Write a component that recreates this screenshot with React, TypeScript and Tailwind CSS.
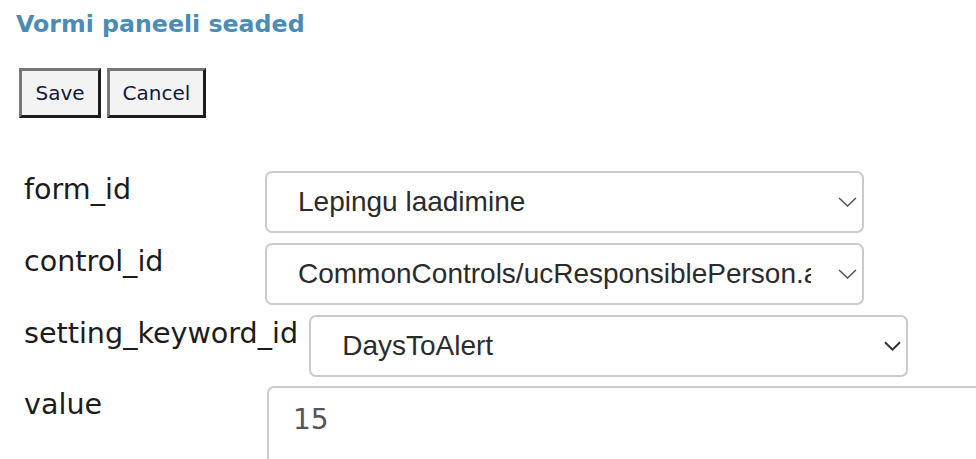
import React from "react";

function Chevron({ bold }: { bold?: boolean }) {
  return (
    <svg
      width={bold ? 17 : 19}
      height="10"
      viewBox={bold ? "0 0 17 10" : "0 0 19 10"}
      fill="none"
      className="shrink-0"
    >
      {bold ? (
        <path d="M1 1.2 L8.5 8.6 L16 1.2" stroke="#333" strokeWidth="2" />
      ) : (
        <path d="M1 1 L9.5 9 L18 1" stroke="#4a4a4a" strokeWidth="1.3" />
      )}
    </svg>
  );
}

function FakeSelect({ text, bold }: { text: string; bold?: boolean }) {
  return (
    <div className="flex h-[62px] w-[599px] shrink-0 items-center rounded-[7px] border-2 border-[#cbcbcb] bg-white pl-[31px] pr-[5px]">
      <span className="min-w-0 flex-1 overflow-hidden whitespace-nowrap font-['Liberation_Sans',Arial,sans-serif] text-[28px] leading-[32px] text-[#2b2b2b]">
        {text}
      </span>
      <span className="ml-[27px] flex items-center">
        <Chevron bold={bold} />
      </span>
    </div>
  );
}

function Label({ children }: { children: React.ReactNode }) {
  return (
    <div className="mt-[2px] mr-[11px] min-w-[230px] whitespace-nowrap text-[28.6px] leading-[32px] text-[#1c1c1c]">
      {children}
    </div>
  );
}

export default function App() {
  return (
    <div className="h-[459px] w-[976px] overflow-hidden bg-white pl-[16px] font-['DejaVu_Sans',Verdana,sans-serif]">
      <h2 className="mt-[10px] text-[23.7px] font-bold leading-[28px] text-[#4b8cb5]">
        Vormi paneeli seaded
      </h2>

      <div className="ml-[3px] mt-[30px] flex gap-[6px]">
        <button className="flex h-[50px] w-[82px] items-center justify-center border-[3px] border-b-[#1c1c1c] border-l-[#767676] border-r-[#1c1c1c] border-t-[#767676] bg-[#f3f3f3] text-[20px] text-[#0f1a3f]">
          Save
        </button>
        <button className="flex h-[50px] w-[99px] items-center justify-center border-[3px] border-b-[#1c1c1c] border-l-[#767676] border-r-[#1c1c1c] border-t-[#767676] bg-[#f3f3f3] text-[20px] text-[#0f1a3f]">
          Cancel
        </button>
      </div>

      <div className="ml-[8px] mt-[53px] flex flex-col gap-[10px]">
        <div className="flex items-start">
          <Label>form_id</Label>
          <FakeSelect text="Lepingu laadimine" />
        </div>
        <div className="flex items-start">
          <Label>control_id</Label>
          <FakeSelect text="CommonControls/ucResponsiblePerson.ascx" />
        </div>
        <div className="flex items-start">
          <Label>setting_keyword_id</Label>
          <FakeSelect text="DaysToAlert" bold />
        </div>
        <div className="-mt-px flex items-start">
          <Label>value</Label>
          <div className="ml-[2px] h-[120px] w-[760px] shrink-0 rounded-[7px] border-2 border-[#cbcbcb] bg-white pl-[24px] pt-[16px] text-[28px] leading-[32px] text-[#555]">
            15
          </div>
        </div>
      </div>
    </div>
  );
}
